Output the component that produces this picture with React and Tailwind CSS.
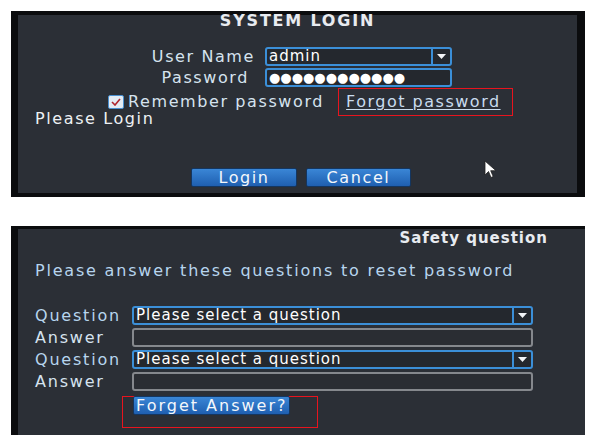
import React from "react";

const font = { fontFamily: '"DejaVu Sans", Verdana, sans-serif' };

const DropArrow = () => (
  <div className="flex h-full w-[19px] items-center justify-center border-l-2 border-[#3b8fd8]">
    <svg width="9" height="5" viewBox="0 0 9 5">
      <path d="M0 0h9L4.5 5z" fill="#f2f4f7" />
    </svg>
  </div>
);

const SelectBox = ({ value, width }) => (
  <div
    className={`flex h-[19px] items-stretch rounded-[3px] border-2 border-[#3b8fd8] bg-[#24282e] ${width}`}
  >
    <div className="flex-1 pl-[2px] text-[15px] leading-[15px] tracking-[1px] text-white">{value}</div>
    <DropArrow />
  </div>
);

const Button = ({ children, className = "" }) => (
  <div
    className={`flex h-[19px] items-center justify-center rounded-[2px] border border-[#143660] bg-gradient-to-b from-[#3a86d6] to-[#1f5fb0] text-[16px] tracking-[1.6px] text-[#f4f7fb] ${className}`}
  >
    {children}
  </div>
);

const Cursor = () => (
  <svg className="absolute left-[466px] top-[145px]" width="14" height="19" viewBox="0 0 14 19">
    <path d="M1 1v14l3.5-3.5 2.5 6 2.2-1-2.5-5.8H12z" fill="#fff" stroke="#222" strokeWidth="0.8" />
  </svg>
);

const Label = ({ children, className = "" }) => (
  <div className={`text-[16px] leading-[18px] tracking-[1.6px] ${className}`}>{children}</div>
);

export default function App() {
  return (
    <div className="h-[442px] w-[598px] bg-white pt-[11px]" style={font}>
      {/* login panel */}
      <div className="relative ml-[11px] h-[186px] w-[574px] border-y-4 border-l-[7px] border-r-[8px] border-[#0b0c0e] bg-[#2b2f36]">
        <div className="mt-[-2px] h-[16px] text-center text-[16px] font-bold leading-[16px] tracking-[1.8px] text-[#e8ebf0]">
          SYSTEM LOGIN
        </div>

        <div className="mt-[18px] flex flex-col gap-[2px]">
          <div className="flex h-[19px] items-center">
            <Label className="w-[237px] text-right text-[#d6e3ef]">User Name</Label>
            <div className="ml-[10px]">
              <SelectBox value="admin" width="w-[187px]" />
            </div>
          </div>
          <div className="flex h-[19px] items-center">
            <Label className="w-[237px] pr-[6px] text-right text-[#d6e3ef]">Password</Label>
            <div className="ml-[10px] flex h-[19px] w-[187px] items-center rounded-[3px] border-2 border-[#3b8fd8] bg-[#24282e] pl-[2px] text-[13px] leading-none text-white">
              ●●●●●●●●●●●●
            </div>
          </div>
        </div>

        <div className="mt-[1px] flex h-[28px] items-center">
          <div className="ml-[90px] flex h-[14px] w-[16px] items-center justify-center rounded-[2px] border border-[#4a90d0] bg-[#e4ecf4]">
            <svg width="10" height="8" viewBox="0 0 10 8">
              <path d="M1 4l3 3 5-6" fill="none" stroke="#b0262d" strokeWidth="1.6" />
            </svg>
          </div>
          <Label className="ml-[4px] text-[#d6e3ef]">Remember password</Label>
          <div className="ml-[14px] flex h-[28px] w-[175px] items-center border border-solid border-[#e8141e] pl-[7px]">
            <span className="text-[16px] tracking-[1.5px] text-[#c9dcee] underline decoration-1 underline-offset-2">
              Forgot password
            </span>
          </div>
        </div>

        <Label className="ml-[17px] mt-[-6px] text-[#eef1f4]">Please Login</Label>

        <div className="ml-[173px] mt-[40px] flex gap-[9px]">
          <Button className="w-[106px]">Login</Button>
          <Button className="w-[105px]">Cancel</Button>
        </div>

        <Cursor />
      </div>

      {/* safety question panel */}
      <div className="ml-[11px] mt-[29px] h-[209px] w-[574px] border-t-[3px] border-l-[7px] border-[#0b0c0e] bg-[#2b2f36]">
        <div className="pr-[37px] text-right text-[15px] font-bold leading-[18px] tracking-[1px] text-[#e8ebf0]">
          Safety question
        </div>
        <Label className="ml-[17px] mt-[15px] tracking-[1.8px] text-[#b7d5ee]">
          Please answer these questions to reset password
        </Label>

        <div className="mt-[26px] flex flex-col gap-[3px]">
          <div className="flex h-[19px] items-center">
            <Label className="ml-[17px] w-[97px] tracking-[1.8px] text-[#b7d5ee]">Question</Label>
            <SelectBox value="Please select a question" width="w-[401px]" />
          </div>
          <div className="flex h-[19px] items-center">
            <Label className="ml-[17px] w-[97px] tracking-[1.8px] text-[#d6e3ef]">Answer</Label>
            <div className="h-[19px] w-[401px] rounded-[3px] border-2 border-[#85888d] bg-[#2a2d33]" />
          </div>
          <div className="flex h-[19px] items-center">
            <Label className="ml-[17px] w-[97px] tracking-[1.8px] text-[#b7d5ee]">Question</Label>
            <SelectBox value="Please select a question" width="w-[401px]" />
          </div>
          <div className="flex h-[19px] items-center">
            <Label className="ml-[17px] w-[97px] tracking-[1.8px] text-[#d6e3ef]">Answer</Label>
            <div className="h-[19px] w-[401px] rounded-[3px] border-2 border-[#85888d] bg-[#2a2d33]" />
          </div>
        </div>

        <div className="relative ml-[104px] mt-[5px] h-[32px] w-[196px] border border-solid border-[#e8141e]">
          <Button className="absolute left-[10px] top-[-1px] w-[157px] justify-start pl-[2px] tracking-[2px]">
            Forget Answer?
          </Button>
        </div>
      </div>
    </div>
  );
}
